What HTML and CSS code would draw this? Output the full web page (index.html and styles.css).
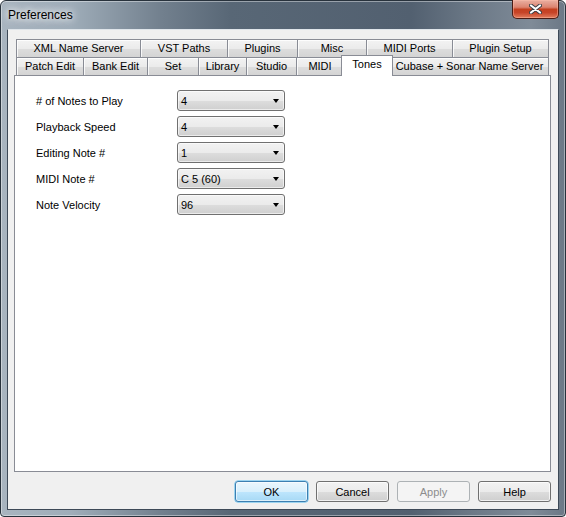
FILE: index.html
```html
<!DOCTYPE html>
<html lang="en">
<head>
    <meta charset="UTF-8">
    <title>Preferences</title>
    <link rel="stylesheet" href="styles.css">
</head>
<body>
    <div class="window">
        <div class="titlebar">
            <span class="title">Preferences</span>
            <button class="close" type="button" aria-label="Close">
                <svg width="13" height="10" viewBox="0 0 13 10">
                    <path d="M2 1.5 L11 8.5 M11 1.5 L2 8.5" stroke="#3a3f46" stroke-width="4" stroke-linecap="round"/>
                    <path d="M2 1.5 L11 8.5 M11 1.5 L2 8.5" stroke="#fff" stroke-width="2.2" stroke-linecap="round"/>
                </svg>
            </button>
        </div>
        <div class="client">
            <div class="tabs">
                <div class="tab-row top">
                    <div class="tab">XML Name Server</div>
                    <div class="tab">VST Paths</div>
                    <div class="tab">Plugins</div>
                    <div class="tab">Misc</div>
                    <div class="tab">MIDI Ports</div>
                    <div class="tab">Plugin Setup</div>
                </div>
                <div class="tab-row bottom">
                    <div class="tab">Patch Edit</div>
                    <div class="tab">Bank Edit</div>
                    <div class="tab">Set</div>
                    <div class="tab">Library</div>
                    <div class="tab">Studio</div>
                    <div class="tab">MIDI</div>
                    <div class="tab active">Tones</div>
                    <div class="tab">Cubase + Sonar Name Server</div>
                </div>
            </div>
            <div class="panel">
                <div class="fields">
                    <label># of Notes to Play</label>
                    <div class="combo"><span>4</span><i class="arrow"></i></div>
                    <label>Playback Speed</label>
                    <div class="combo"><span>4</span><i class="arrow"></i></div>
                    <label>Editing Note #</label>
                    <div class="combo"><span>1</span><i class="arrow"></i></div>
                    <label>MIDI Note #</label>
                    <div class="combo"><span>C 5 (60)</span><i class="arrow"></i></div>
                    <label>Note Velocity</label>
                    <div class="combo"><span>96</span><i class="arrow"></i></div>
                </div>
            </div>
            <div class="buttons">
                <button type="button" class="btn default">OK</button>
                <button type="button" class="btn">Cancel</button>
                <button type="button" class="btn" disabled>Apply</button>
                <button type="button" class="btn">Help</button>
            </div>
        </div>
    </div>
</body>
</html>
```

FILE: styles.css
```css
body {
    margin: 0;
    background: #fff;
    font-family: 'Liberation Sans', Arial, sans-serif;
    font-size: 11px;
    color: #000;
}
.window {
    width: 566px;
    height: 517px;
    box-sizing: border-box;
    display: flex;
    flex-direction: column;
    padding: 0 6px 6px 6px;
    border: 1px solid #28323c;
    border-radius: 6px 6px 4px 4px;
    background: linear-gradient(to right, #a8b4bf 0px, #9fadb9 70px, #72808e 160px, #586776 230px, #526070 410px, #6b7886 470px, #7f8b98 530px, #6a7785 566px);
    box-shadow: inset 0 0 0 1px rgba(255, 255, 255, 0.4);
}
.titlebar {
    height: 28px;
    display: flex;
    justify-content: space-between;
    align-items: flex-start;
}
.title {
    margin: 7px 0 0 1px;
    font-size: 12px;
    line-height: 15px;
    color: #000;
    text-shadow: 0 0 6px #fff, 0 0 10px rgba(255, 255, 255, 0.9), 0 0 14px rgba(255, 255, 255, 0.6);
}
.close {
    width: 47px;
    height: 19px;
    margin-top: -1px;
    padding: 0;
    display: flex;
    align-items: center;
    justify-content: center;
    border: 1px solid #4a1c14;
    border-top: none;
    border-radius: 0 0 5px 5px;
    background: linear-gradient(#eab0a2 0%, #dc8470 40%, #c4401f 52%, #c74428 70%, #e27c5c 100%);
    box-shadow: inset 0 0 0 1px rgba(255, 190, 170, 0.45);
}
.client {
    flex: 1;
    display: flex;
    flex-direction: column;
    padding: 9px 7px 7px 6px;
    background: #f0f0f0;
    border: 1px solid #3d4957;
    border-top-color: #dfe5ea;
}

/* two rows of tabs; neighbours share a border (margin-left: -1px) */
.tabs {
    margin: 0 2px;
}
.tab-row {
    display: flex;
    height: 18px;
}
.tab {
    flex: 0 0 auto;
    margin-left: -1px;
    height: 18px;
    box-sizing: border-box;
    border: 1px solid #898c95;
    border-bottom: none;
    background: linear-gradient(#f3f3f3 0%, #ebebeb 50%, #dddddd 51%, #d4d4d4 100%);
    box-shadow: inset 1px 1px 0 rgba(255, 255, 255, 0.8);
    text-align: center;
    line-height: 17px;
    white-space: nowrap;
}
.tab:first-child {
    margin-left: 0;
}
.top .tab:nth-child(1) { width: 125px; }
.top .tab:nth-child(2) { width: 88px; }
.top .tab:nth-child(3) { width: 71px; }
.top .tab:nth-child(4) { width: 70px; }
.top .tab:nth-child(5) { width: 87px; }
.top .tab:nth-child(6) { width: 97px; }
.bottom .tab:nth-child(1) { width: 68px; }
.bottom .tab:nth-child(2) { width: 65px; }
.bottom .tab:nth-child(3) { width: 52px; }
.bottom .tab:nth-child(4) { width: 49px; }
.bottom .tab:nth-child(5) { width: 51px; }
.bottom .tab:nth-child(6) { width: 48px; }
.bottom .tab:nth-child(8) { width: 159px; }
/* selected tab grows 2px up and sideways and covers the panel's top line */
.bottom .tab.active {
    position: relative;
    z-index: 1;
    width: 52px;
    height: 21px;
    margin: -2px -2px -1px -3px;
    background: #fff;
    box-shadow: none;
}
.panel {
    height: 397px;
    box-sizing: border-box;
    border: 1px solid #898c95;
    background: #fff;
    padding: 14px 0 0 21px;
}
.fields {
    display: grid;
    grid-template-columns: 141px 108px;
    row-gap: 5px;
    align-items: center;
}
.combo {
    height: 21px;
    box-sizing: border-box;
    display: flex;
    align-items: center;
    justify-content: space-between;
    padding: 0 5px 0 3px;
    border: 1px solid #707070;
    border-radius: 3px;
    background: linear-gradient(#f2f2f2 0%, #ebebeb 50%, #dddddd 51%, #cfcfcf 100%);
    box-shadow: inset 0 0 0 1px rgba(255, 255, 255, 0.6);
}
.arrow {
    width: 0;
    height: 0;
    border-left: 3.5px solid transparent;
    border-right: 3.5px solid transparent;
    border-top: 4px solid #000;
}
.buttons {
    display: flex;
    justify-content: flex-end;
    gap: 8px;
    margin-top: 9px;
}
.btn {
    width: 73px;
    height: 21px;
    padding: 0;
    font-family: 'Liberation Sans', Arial, sans-serif;
    font-size: 11px;
    color: #000;
    border: 1px solid #707070;
    border-radius: 3px;
    background: linear-gradient(#f2f2f2 0%, #ebebeb 50%, #dddddd 51%, #cfcfcf 100%);
    box-shadow: inset 0 0 0 1px rgba(255, 255, 255, 0.7);
}
.btn.default {
    border-color: #3c7fb1;
    background: linear-gradient(#eaf6fd 0%, #d9f0fc 50%, #bee6fd 51%, #a7d9f5 100%);
    box-shadow: inset 0 0 0 1px rgba(255, 255, 255, 0.6), 0 0 0 0.5px #48b8f0;
}
.btn:disabled {
    color: #8d8d8d;
    border-color: #adb2b5;
    background: #f4f4f4;
    box-shadow: none;
}
```
